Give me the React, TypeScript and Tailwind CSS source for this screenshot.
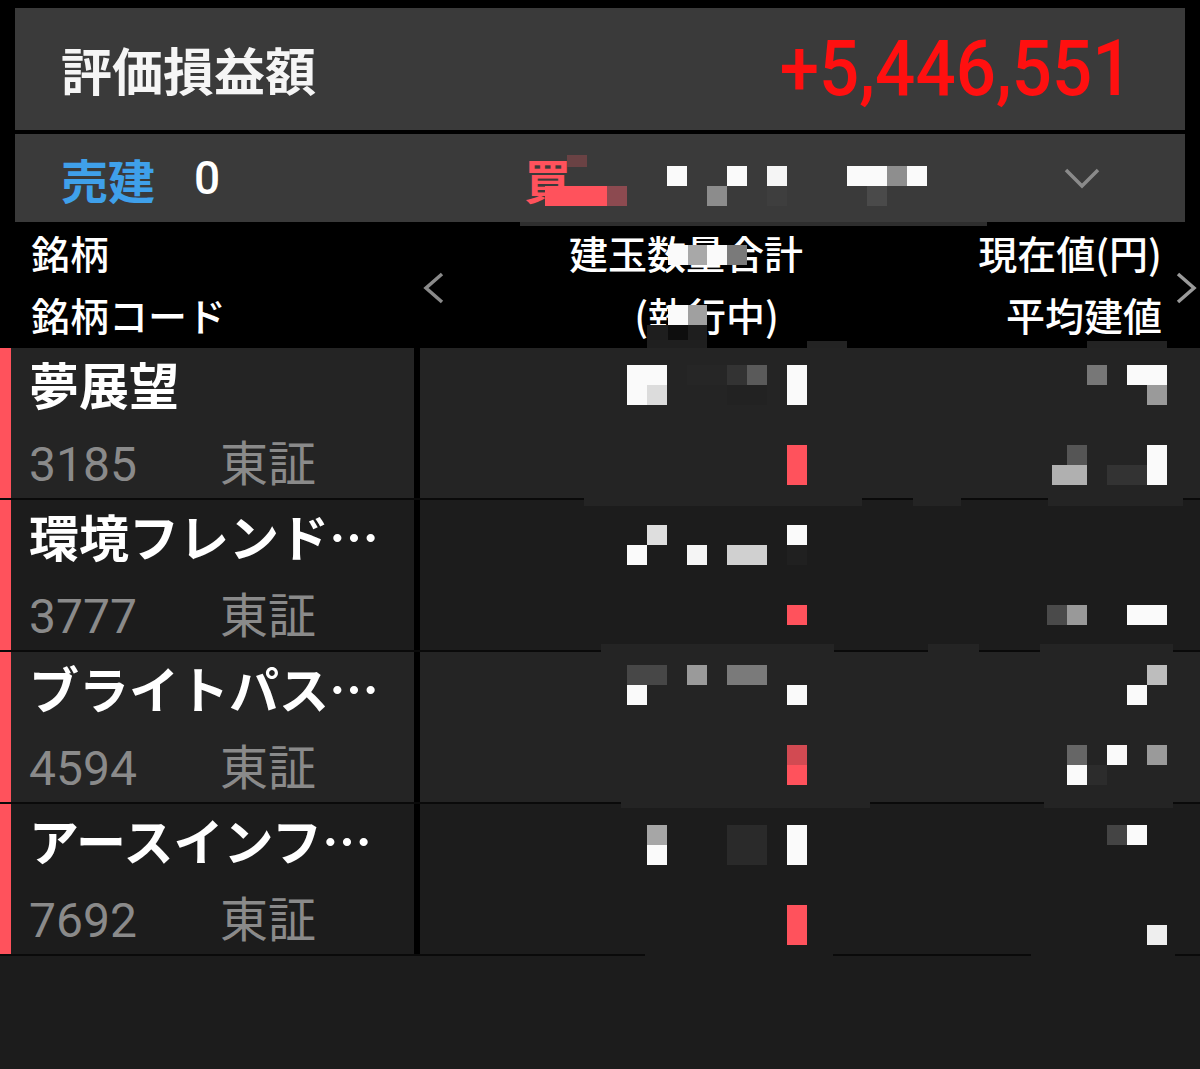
import type { CSSProperties } from 'react'

type Holding = {
  name: string
  code: string
  market: string
  bg: string
}

// mosaic cells that hide the private numbers: [x, y, w, h, colour]
type Cell = [number, number, number, number, string]

const holdings: Holding[] = [
  { name: '夢展望', code: '3185', market: '東証', bg: 'bg-[#242424]' },
  { name: '環境フレンド…', code: '3777', market: '東証', bg: 'bg-[#1c1c1c]' },
  { name: 'ブライトパス…', code: '4594', market: '東証', bg: 'bg-[#242424]' },
  { name: 'アースインフ…', code: '7692', market: '東証', bg: 'bg-[#1c1c1c]' },
]

const W = '#fafafa'
const RED = '#ff525c'

const cells: Cell[] = [
  // summary bar (買建)
  [545, 186, 62, 20, RED],
  [607, 186, 20, 20, '#8c4a50'],
  [567, 155, 20, 12, '#6a4244'],
  [667, 166, 20, 20, W],
  [707, 186, 20, 20, '#8c8c8c'],
  [727, 166, 20, 20, W],
  [767, 166, 20, 20, '#f5f5f5'],
  [767, 186, 20, 20, '#3e3e3e'],
  [847, 166, 40, 20, W],
  [887, 166, 20, 20, '#8e8e8e'],
  [907, 166, 20, 20, W],
  [867, 186, 20, 20, '#4a4a4a'],
  [520, 222, 467, 4, '#2e2e2e'],
  // column header
  [668, 245, 20, 20, W],
  [688, 245, 19, 20, '#a8a8a8'],
  [707, 245, 20, 20, W],
  [727, 245, 20, 20, '#7a7a7a'],
  [668, 305, 20, 20, W],
  [688, 305, 19, 20, '#a0a0a0'],
  [647, 325, 21, 20, '#1e1e1e'],
  [668, 325, 20, 20, '#0e0e0e'],
  [688, 325, 19, 20, '#1e1e1e'],
  [647, 340, 60, 8, '#1f1f1f'],
  [807, 341, 40, 7, '#232323'],
  [1087, 341, 80, 7, '#232323'],
  // row 1
  [627, 365, 40, 40, W],
  [647, 385, 20, 20, '#dcdcdc'],
  [687, 365, 40, 20, '#262626'],
  [727, 365, 20, 20, '#333333'],
  [747, 365, 20, 20, '#5a5a5a'],
  [727, 385, 40, 20, '#222222'],
  [787, 365, 20, 40, W],
  [1087, 365, 20, 20, '#777777'],
  [1127, 365, 40, 20, W],
  [1147, 385, 20, 20, '#9a9a9a'],
  [787, 445, 20, 40, RED],
  [1067, 445, 20, 20, '#555555'],
  [1052, 465, 35, 20, '#b0b0b0'],
  [1107, 465, 40, 20, '#333333'],
  [1147, 445, 20, 40, W],
  [584, 498, 278, 8, '#242424'],
  [913, 498, 48, 8, '#242424'],
  [1048, 498, 135, 8, '#242424'],
  // row 2
  [647, 525, 20, 20, '#dedede'],
  [627, 545, 20, 20, W],
  [687, 545, 20, 20, '#f5f5f5'],
  [727, 545, 40, 20, '#d0d0d0'],
  [787, 525, 20, 20, W],
  [787, 545, 20, 20, '#202020'],
  [787, 605, 20, 20, RED],
  [1047, 605, 20, 20, '#4a4a4a'],
  [1067, 605, 20, 20, '#999999'],
  [1127, 605, 40, 20, W],
  [601, 644, 233, 8, '#242424'],
  [928, 644, 51, 8, '#242424'],
  [1040, 644, 133, 8, '#242424'],
  // row 3
  [627, 665, 40, 20, '#474747'],
  [627, 685, 20, 20, W],
  [687, 665, 20, 20, '#9a9a9a'],
  [727, 665, 40, 20, '#7a7a7a'],
  [787, 685, 20, 20, W],
  [1147, 665, 20, 20, '#bdbdbd'],
  [1127, 685, 20, 20, W],
  [787, 745, 20, 20, '#d24a52'],
  [787, 765, 20, 20, RED],
  [1067, 745, 20, 20, '#666666'],
  [1107, 745, 20, 20, W],
  [1147, 745, 20, 20, '#9a9a9a'],
  [1067, 765, 20, 20, W],
  [1087, 765, 20, 20, '#2c2c2c'],
  [621, 801, 249, 7, '#242424'],
  [1044, 801, 129, 7, '#242424'],
  // row 4
  [647, 825, 20, 20, '#a6a6a6'],
  [647, 845, 20, 20, W],
  [727, 825, 40, 40, '#2a2a2a'],
  [787, 825, 20, 40, W],
  [1107, 825, 20, 20, '#444444'],
  [1127, 825, 20, 20, W],
  [787, 905, 20, 40, RED],
  [1147, 925, 20, 20, '#eeeeee'],
  [645, 953, 188, 6, '#1c1c1c'],
  [1031, 953, 144, 6, '#1c1c1c'],
]

function cellStyle(c: Cell): CSSProperties {
  return { left: c[0], top: c[1], width: c[2], height: c[3], background: c[4] }
}

function Chevron({ dir }: { dir: 'left' | 'right' | 'down' }) {
  if (dir === 'down') {
    return (
      <svg width="36" height="22" viewBox="0 0 36 22" className="block">
        <polyline points="2,3 18,19 34,3" fill="none" stroke="#8a8a8a" strokeWidth="3.5" />
      </svg>
    )
  }
  return (
    <svg width="22" height="32" viewBox="0 0 22 32" className="mt-[6px] block">
      <polyline
        points={dir === 'left' ? '19,2 3,16 19,30' : '3,2 19,16 3,30'}
        fill="none"
        stroke={dir === 'left' ? '#8a8a8a' : '#9a9a9a'}
        strokeWidth="3.5"
      />
    </svg>
  )
}

export default function App() {
  return (
    <div className="relative flex h-[1069px] w-[1200px] flex-col overflow-hidden bg-black font-['Roboto','Noto_Sans_CJK_JP',sans-serif] text-white">
      {/* summary panels */}
      <div className="px-[15px] pt-[8px]">
        <div className="flex h-[122px] items-center justify-between bg-[#3a3a3a] pl-[46px] pr-[52px]">
          <span className="font-['Noto_Sans_CJK_JP',sans-serif] text-[51px] font-bold leading-none text-[#f5f5f5]">
            評価損益額
          </span>
          <span className="inline-block origin-right scale-x-[0.92] text-[77px] font-medium leading-none text-[#ff1010]">
            +5,446,551
          </span>
        </div>
        <div className="mt-[4px] flex h-[88px] items-center bg-[#3a3a3a] pl-[46px]">
          <span className="font-['Noto_Sans_CJK_JP',sans-serif] text-[47px] font-bold leading-none text-[#3fa0ea]">
            売建
          </span>
          <span className="ml-[39px] text-[46px] font-medium leading-none">0</span>
          <span className="ml-[304px] font-['Noto_Sans_CJK_JP',sans-serif] text-[47px] font-bold leading-none text-[#ff525c]">
            買
          </span>
          <div className="ml-auto mr-[85px]">
            <Chevron dir="down" />
          </div>
        </div>
      </div>

      {/* column header */}
      <div className="flex h-[126px] font-['Noto_Sans_CJK_JP',sans-serif] text-[39px] font-medium leading-none">
        <div className="flex w-[418px] flex-col pl-[31px] pt-[11px]">
          <span>銘柄</span>
          <span className="mt-[23px]">銘柄コード</span>
        </div>
        <div className="flex w-[30px] items-center pl-[5px]">
          <Chevron dir="left" />
        </div>
        <div className="flex w-[355px] flex-col items-end pt-[11px]">
          <span>建玉数量合計</span>
          <span className="mt-[23px] pr-[24px]">(執行中)</span>
        </div>
        <div className="flex w-[359px] flex-col items-end pt-[11px]">
          <span>現在値(円)</span>
          <span className="mt-[23px]">平均建値</span>
        </div>
        <div className="ml-[13px] flex items-center">
          <Chevron dir="right" />
        </div>
      </div>

      {/* holdings */}
      <div className="flex flex-col">
        {holdings.map(h => (
          <div key={h.code} className={`flex h-[152px] border-b-2 border-[#0a0a0a] ${h.bg}`}>
            <div className="w-[11px] bg-[#ff525c]" />
            <div className="flex w-[403px] flex-col pl-[18px] pt-[10px]">
              <span className="whitespace-nowrap font-['Noto_Sans_CJK_JP',sans-serif] text-[50px] font-bold leading-none">
                {h.name}
              </span>
              <div className="mt-[28px] flex items-baseline leading-none text-[#8a8a8a]">
                <span className="w-[191px] text-[48px]">{h.code}</span>
                <span className="font-['Noto_Sans_CJK_JP',sans-serif] text-[48px]">{h.market}</span>
              </div>
            </div>
            <div className="w-[6px] bg-black" />
            <div className="flex-1" />
          </div>
        ))}
      </div>
      <div className="flex-1 bg-[#1c1c1c]" />

      {/* mosaic */}
      <div className="pointer-events-none absolute inset-0">
        {cells.map((c, i) => (
          <div key={i} className="absolute" style={cellStyle(c)} />
        ))}
      </div>
    </div>
  )
}
